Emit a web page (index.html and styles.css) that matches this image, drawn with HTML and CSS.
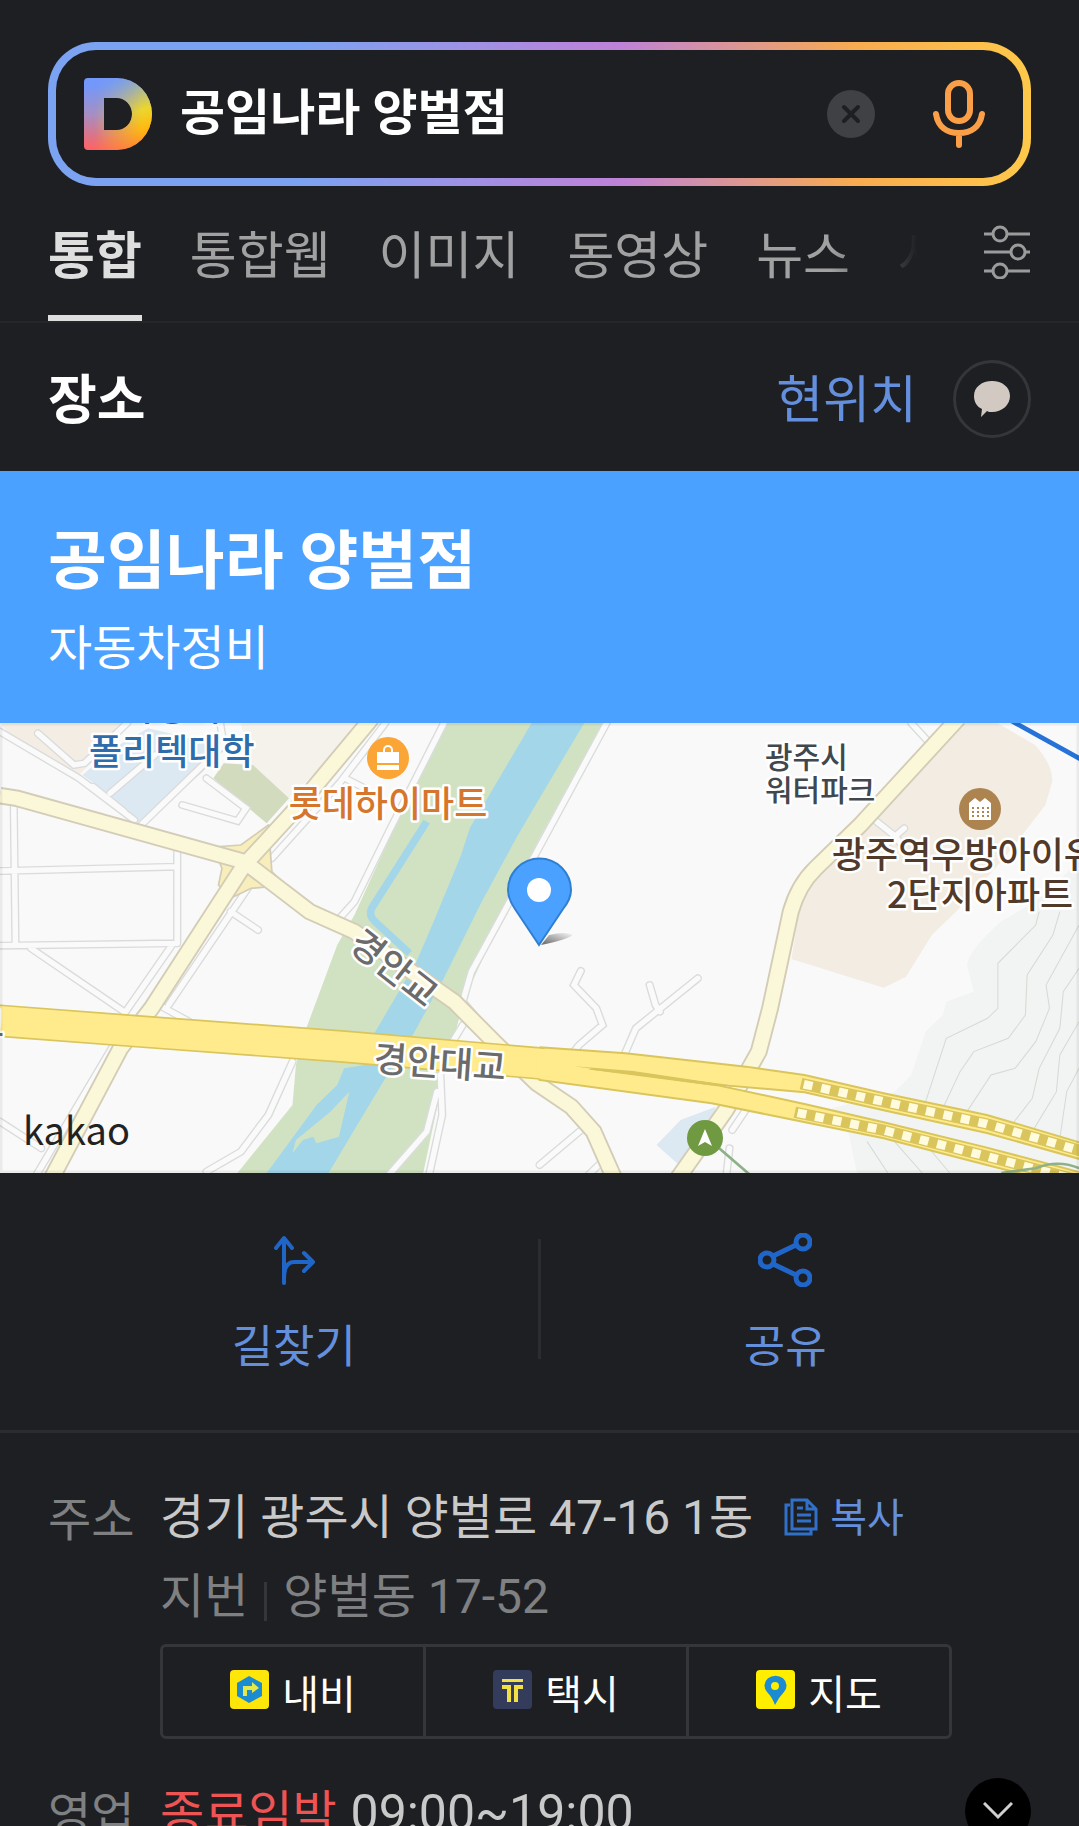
FILE: index.html
```html
<!DOCTYPE html>
<html lang="ko">
<head>
  <meta charset="UTF-8" />
  <meta name="viewport" content="width=device-width, initial-scale=1" />
  <title>공임나라 양벌점</title>
  <link rel="stylesheet" href="styles.css">
</head>
<body>

  <header>
    <form class="search">
      <div class="search-inner">
        <svg class="logo" viewBox="0 0 68 72" aria-hidden="true">
          <defs>
            <linearGradient id="logoBase" x1="0" y1="0" x2="0" y2="1">
              <stop offset="0.1" stop-color="#7398fb" />
              <stop offset="0.5" stop-color="#a58ec4" />
              <stop offset="1" stop-color="#ff6262" />
            </linearGradient>
            <linearGradient id="logoSide" x1="0.5" y1="0" x2="0.75" y2="1">
              <stop offset="0" stop-color="#7d9fe8" />
              <stop offset="0.5" stop-color="#ecd62c" />
              <stop offset="0.75" stop-color="#ffb911" />
              <stop offset="1" stop-color="#ff8a2a" />
            </linearGradient>
            <linearGradient id="logoFade" x1="0" y1="0" x2="1" y2="0">
              <stop offset="0.15" stop-color="#000" />
              <stop offset="0.85" stop-color="#fff" />
            </linearGradient>
            <mask id="logoMask"><rect width="68" height="72" fill="url(#logoFade)" /></mask>
          </defs>
          <path fill="url(#logoBase)" fill-rule="evenodd" d="M4 0H33A35 36 0 0 1 33 72H4Q0 72 0 68V4Q0 0 4 0ZM20 20V52H33A15 16 0 0 0 33 20Z" />
          <path fill="url(#logoSide)" mask="url(#logoMask)" fill-rule="evenodd" d="M4 0H33A35 36 0 0 1 33 72H4Q0 72 0 68V4Q0 0 4 0ZM20 20V52H33A15 16 0 0 0 33 20Z" />
        </svg>
        <input type="text" class="search-input" aria-label="검색어" value="공임나라 양벌점" />
        <button type="button" class="clear" aria-label="지우기">
          <svg viewBox="0 0 48 48"><path d="M17 17L31 31M31 17L17 31" /></svg>
        </button>
        <button type="button" class="mic" aria-label="음성 검색">
          <svg viewBox="0 0 52 68">
            <rect x="15" y="3" width="22" height="38" rx="11" />
            <path d="M3 34C5 47 14 53 26 53S47 47 49 34M26 53V65" />
          </svg>
        </button>
      </div>
    </form>

    <div class="tabs">
      <nav class="tab-list">
        <a href="#" class="tab active">통합</a>
        <a href="#" class="tab">통합웹</a>
        <a href="#" class="tab">이미지</a>
        <a href="#" class="tab">동영상</a>
        <a href="#" class="tab">뉴스</a>
        <a href="#" class="tab">사전</a>
      </nav>
      <button class="filter" aria-label="검색 옵션">
        <svg viewBox="0 0 48 54">
          <path d="M1 9H10M24 9H47M1 27H28M42 27H47M1 46H10M24 46H47" />
          <circle cx="17" cy="9" r="7" /><circle cx="35" cy="27" r="7" /><circle cx="17" cy="46" r="7" />
        </svg>
      </button>
    </div>
  </header>

  <main>
    <div class="place-head">
      <h2>장소</h2>
      <a href="#" class="here">현위치</a>
      <button class="talk" aria-label="톡으로 공유">
        <svg viewBox="0 0 36 38"><path d="M18 1C28 1 36 7 36 16S28 32 18 32C16 32 14 32 13 31L7 37L8 29C3 27 0 22 0 16C0 7 8 1 18 1Z" /></svg>
      </button>
    </div>

    <div class="place-title">
      <h1>공임나라 양벌점</h1>
      <p>자동차정비</p>
    </div>

    <svg class="map" viewBox="0 0 1079 450" preserveAspectRatio="xMidYMid slice" role="img" aria-label="지도">
      <defs>
        <path id="minor" d="M0 50L230 190L390 315M110 55L215 150L245 145L370 24M40 270L45 690M0 468L515 455M515 400V685M0 692L510 685M90 700L360 890M270 215L360 290M320 235L450 120M410 330L580 160L650 90L640 24M600 190L715 280L690 318L530 270M1290 24L1130 350L1030 560L985 612M1120 24L990 200L790 430M1000 188L1060 220M365 890L500 690M120 1300L0 1220M100 1390L330 990M490 870L720 520M670 590L750 645M470 875L550 920M850 1040L780 1200L700 1310L600 1370M1763 24L1568 395L1370 770L1345 860L1390 915M1345 930L1310 990M1280 1080L1285 1200L1245 1390M1270 1130L1240 1250L1130 1380M1688 768L1668 810L1733 880L1751 930L1683 990L1660 1020M2028 790L1848 940L1810 1030M1888 810L1905 870L1918 890M2548 320L2603 365L2620 390M2628 340L2578 385M2648 24L2698 80M2190 1150L2128 1245M1568 1350L1695 1240M1710 1380L1760 1330M2120 1300L2110 1390" />
        <path id="local" d="M0 242L50 250L710 440L900 590L1030 650L1320 860L1440 985L1560 1105L1660 1175L1725 1250L1785 1390M1080 10L870 270L710 450L440 880L350 1000L150 1390M2785 10L2500 330L2370 460Q2320 510 2298 590L2238 880L2205 1010L2110 1185L1970 1390" />
        <path id="highway" d="M-30 915L400 949L1000 995L1600 1048" />
        <path id="tunnelA" d="M2328 1106L2568 1160L2868 1227L3150 1310" />
        <path id="tunnelB" d="M2310 1192L2568 1246L2868 1324L3150 1400" />
      </defs>
      <rect width="1079" height="450" fill="#f9f9f9" />

      <g transform="scale(.3441 .3333) translate(0 -24)">
        <path fill="#f3ede4" d="M0 24H380L220 190L30 60Z" />
        <path fill="#dce8f2" d="M240 180L330 100L430 40L640 90L590 170L410 330L320 240Z" />
        <path fill="#f5f2ec" d="M700 24H1060L870 220L840 250L730 150Z" />
        <path fill="#d2dbbe" d="M650 145L735 150L840 250L775 325L620 190Z" />
        <path fill="#f2ece2" d="M2800 24H2898L3008 90Q3060 150 3058 200L3038 270L2918 430L2778 590L2708 660L2633 785L2568 818L2300 732L2330 540Z" />
        <path fill="#f1f4f3" d="M3136 440L3008 560L2908 620Q2800 720 2812 760L2830 830L2750 860L2740 900L2690 950L2648 1080L2600 1130L2418 1180L2468 1260L2490 1374H3136Z" />
        <g class="contour">
          <path d="M3020 590L3010 630L2900 745V880L2870 910L2750 970L2690 1160M3080 590L3060 660L2985 780L2980 900L2930 970L2830 1010L2790 1070L2740 1180M3136 630L3040 810L3050 880L3010 980L2950 1060L2880 1080L2810 1190M3136 760L3090 830L3080 940L3020 1060L3000 1150L2940 1230M3136 920L3080 1020L3070 1130L3000 1250M3136 1060L3100 1130L3080 1270M2520 1280L2580 1374M2600 1280L2680 1374M2700 1300L2760 1374" />
        </g>
        <path fill="#d1e2c3" d="M1290 24L1180 260L1030 600L980 690L890 940L860 1050L850 1170L690 1374H1230L1290 1080L1350 850L1480 560L1568 370L1755 24Z" />
        <path fill="#a4d6ea" d="M1545 24L1365 340L1340 420L1260 620L1210 740L1085 960L1060 1050L1000 1060L980 1110L920 1170L775 1374H955L1050 1210L1120 1090L1200 960L1290 790L1400 560L1500 370L1568 250L1698 24Z" />
        <path fill="none" stroke="#a4d6ea" stroke-width="22" d="M1240 320L1080 580Q1070 600 1090 620L1190 715" />
        <path fill="#d1e2c3" d="M1015 1130L985 1265L920 1285L910 1265L880 1275L850 1315L860 1275L960 1190Z" />
        <path fill="#dce8f2" d="M2080 1175L1978 1215L1908 1290L1968 1345L2060 1250Z" />

        <use href="#minor" class="minor-edge" />
        <use href="#minor" class="minor-fill" />
        <path fill="#f8eebb" stroke="#d3ccb6" stroke-width="5" d="M620 396L700 390L780 330L800 340L785 400L790 470L830 510L730 520L670 550L635 510L645 460Z" />
        <use href="#local" class="local-edge" />
        <use href="#local" class="local-fill" />

        <use href="#highway" class="highway-edge" />
        <path class="highway" d="M1568 1020L1668 1055L2090 1112L2338 1167L2568 1222L2868 1298L3150 1375V1425L2868 1350L2568 1270L2308 1215L2068 1165L1568 1095Z" />
        <path class="highway" d="M1568 997L1818 1015L2168 1055L2338 1080L2568 1135L2868 1200L3150 1286V1336L2868 1254L2568 1186L2338 1132L2118 1112L1668 1055Z" />
        <use href="#highway" class="highway-fill" />
        <path fill="#ffea8c" d="M1560 1001L1660 1009L1720 1060L1640 1100L1560 1089Z" />
        <path fill="#d9c55c" d="M1668 1054L1840 1068L2060 1102L2118 1114L2060 1110Z" />
        <use href="#tunnelA" class="tunnel" />
        <use href="#tunnelB" class="tunnel" />
        <use href="#tunnelA" class="tunnel-dash" />
        <use href="#tunnelB" class="tunnel-dash" />

        <path fill="none" stroke="#2672d8" stroke-width="14" d="M2940 18L3150 138" />
        <path fill="none" stroke="#8fb18a" stroke-width="8" d="M2090 1300L2180 1380M2910 1374L3010 1360Q3080 1330 3150 1366" />
      </g>

      <g class="pois">
        <circle cx="388" cy="35" r="21" fill="#fba536" />
        <path fill="#fff" d="M377 29H383V27A5 5 0 0 1 393 27V29H399V40H377ZM385 29H391V27A3 3 0 0 0 385 27ZM377 42H399V47H377Z" />
        <circle cx="980" cy="86" r="21" fill="#ad8450" />
        <path fill="#fff" d="M969 80L975 75L980 79L985 75L991 80V97H969Z" />
        <path stroke="#ad8450" stroke-width="2" stroke-dasharray="2 3" d="M972 85H989M972 89H989M972 93H989" />
        <circle cx="705" cy="415" r="18" fill="#6f9a41" />
        <path fill="#fff" d="M705 406L712 423L705 419L698 423Z" />
      </g>

      <g class="label">
        <text x="121" y="-2" fill="#2f6cab">국성대</text>
        <text x="89" y="42" fill="#2f6cab">폴리텍대학</text>
        <text x="388" y="94" fill="#d6762c" text-anchor="middle">롯데하이마트</text>
        <text x="394" y="258" fill="#6b6b6b" text-anchor="middle" transform="rotate(38 394 245)">경안교</text>
        <text x="440" y="353" fill="#6b6b6b" text-anchor="middle" transform="rotate(4 440 339)">경안대교</text>
        <text x="-29" y="314" fill="#6b6b6b">교</text>
        <text x="832" y="145" fill="#523a2b">광주역우방아이유쉘</text>
        <text x="887" y="185" fill="#523a2b">2단지아파트</text>
        <text x="765" y="45" fill="#3f484e" class="park">광주시</text>
        <text x="765" y="78" fill="#3f484e" class="park">워터파크</text>
      </g>
      <text x="23" y="422" class="kakao">kakao</text>

      <defs>
        <linearGradient id="pinShadow" x1="0" y1="1" x2="1" y2="0">
          <stop offset="0" stop-color="#000" stop-opacity="0.6" />
          <stop offset="1" stop-color="#000" stop-opacity="0" />
        </linearGradient>
      </defs>
      <path fill="url(#pinShadow)" d="M541 222L549 212Q566 208 573 212Q566 217 541 222Z" />
      <path fill="#4aa1ff" stroke="#2f7fd0" stroke-width="2" d="M539 222L515 186Q508 176 508 167A31 31 0 0 1 571 167Q571 176 563 186Z" />
      <circle cx="539" cy="167" r="12" fill="#fff" />
      <path fill="none" stroke="#000" stroke-opacity="0.06" stroke-width="5" d="M0 0H1079V450H0Z" />
    </svg>

    <div class="actions">
      <button class="action">
        <svg viewBox="0 0 54 54">
          <path stroke-width="4" d="M17 50V6M9 15L17 5L25 15M17 46Q17 29 27 29H45M37 20L46 29L37 38" />
        </svg>
        길찾기
      </button>
      <button class="action">
        <svg viewBox="0 0 54 54">
          <path stroke-width="5" d="M15 23L38 12M15 31L38 42" />
          <circle cx="9" cy="27" r="7" stroke-width="5" /><circle cx="45" cy="9" r="7" stroke-width="5" /><circle cx="45" cy="45" r="7" stroke-width="5" />
        </svg>
        공유
      </button>
    </div>

    <dl class="info">
      <dt>주소</dt>
      <dd>
        <div class="address">
          경기 광주시 양벌로 47-16 1동
          <button class="copy">
            <svg viewBox="0 0 34 38">
              <path d="M8 2H23L32 11V31H8ZM23 2V11H32M6 7H2V36H27V32M13 10H19M13 17H27M13 23H27" />
            </svg>
            복사
          </button>
        </div>
        <div class="jibun"><span>지번</span><span class="bar"></span><span>양벌동 17-52</span></div>
        <div class="apps">
          <a href="#">
            <svg viewBox="0 0 39 39">
              <rect width="39" height="39" rx="4" fill="#ffe60a" />
              <path fill="#1c8cd2" d="M19 6L32 13V26L19 33L7 26V13Z" />
              <path fill="#e4e84a" d="M13 26V16H22V12L29 18L22 23V20H17V26Z" />
            </svg>
            내비
          </a>
          <a href="#">
            <svg viewBox="0 0 39 39">
              <rect width="39" height="39" rx="4" fill="#343c5c" />
              <path fill="#f2e043" d="M9 9H30V12H9ZM9 15H18V32H14V19H9ZM21 15H30V19H25V32H21Z" />
            </svg>
            택시
          </a>
          <a href="#">
            <svg viewBox="0 0 39 39">
              <rect width="39" height="39" rx="4" fill="#ffee00" />
              <path fill="#1c8cd2" fill-rule="evenodd" d="M19 35Q16 27 11 22A11 10 0 1 1 28 22Q23 27 19 35ZM19 12A4 4 0 1 0 19 20A4 4 0 1 0 19 12Z" />
            </svg>
            지도
          </a>
        </div>
      </dd>
      <dt>영업</dt>
      <dd class="hours">
        <span><em>종료임박</em> <span class="time">09:00~19:00</span></span>
        <button class="more" aria-label="더보기">
          <svg viewBox="0 0 30 18"><path d="M1 1L15 15L29 1" /></svg>
        </button>
      </dd>
    </dl>
  </main>

</body>
</html>
```
FILE: styles.css
```css
* {
  box-sizing: border-box;
}

html, body {
  margin: 0;
  padding: 0;
  height: 100%;
  overflow: hidden;
  font-family: Roboto, "Noto Sans CJK KR", sans-serif;
  font-size: 48px;
  background-color: #1e1f23;
  color: #c9c9c9;
}

h1, h2, p, dl, dd {
  margin: 0;
}

a {
  color: inherit;
  text-decoration: none;
}

button {
  padding: 0;
  border: 0;
  background: none;
  color: inherit;
  font: inherit;
}

svg {
  display: block;
  fill: none;
}

/* search */
.search {
  margin: 42px 48px 0;
  padding: 8px;
  border-radius: 48px;
  background: linear-gradient(90deg, #7ba3f2 25%, #be82d8 58%, #f8ab50 82%, #ffc94a);
}

.search-inner {
  display: flex;
  align-items: center;
  height: 128px;
  padding: 0 38px 0 28px;
  border-radius: 40px;
  background: #1e1f23;
}

.logo {
  width: 68px;
  height: 72px;
}

.search-input {
  flex: 1;
  min-width: 0;
  height: 72px;
  margin-left: 28px;
  padding: 0;
  border: 0;
  outline: 0;
  background: none;
  color: #fff;
  font: bold 49px/72px Roboto, "Noto Sans CJK KR", sans-serif;
}

.clear {
  width: 48px;
  height: 48px;
  margin-right: 58px;
  border-radius: 50%;
  background: #404145;
}

.clear path {
  stroke: #1e1f23;
  stroke-width: 4;
  stroke-linecap: round;
}

.mic {
  width: 52px;
}

.mic svg {
  stroke: #fa9f47;
  stroke-width: 6;
  stroke-linecap: round;
}

/* tabs */
.tabs {
  display: flex;
  align-items: center;
  height: 137px;
  padding: 0 48px;
  border-bottom: 2px solid #25262a;
}

.tab-list {
  display: flex;
  flex: 1;
  min-width: 0;
  gap: 48px;
  height: 100%;
  margin-right: 65px;
  overflow: hidden;
  -webkit-mask-image: linear-gradient(90deg, #000 90%, transparent);
  mask-image: linear-gradient(90deg, #000 90%, transparent);
}

.tab {
  flex: none;
  padding-top: 35px;
  border-bottom: 6px solid transparent;
  color: #a1a1a2;
  font-size: 51px;
  line-height: 72px;
}

.tab.active {
  border-color: #dedede;
  color: #dedede;
  font-weight: bold;
}

.filter {
  width: 48px;
  margin-bottom: 4px;
}

.filter svg {
  stroke: #9b9b9b;
  stroke-width: 3;
}

/* place */
.place-head {
  display: flex;
  align-items: center;
  height: 148px;
  padding: 4px 48px 0;
}

.place-head h2 {
  flex: 1;
  padding-top: 4px;
  color: #fff;
  font-size: 53px;
  line-height: 72px;
}

.here {
  margin-right: 36px;
  padding-top: 4px;
  color: #648fdc;
  font-size: 51px;
  line-height: 72px;
}

.talk {
  display: flex;
  justify-content: center;
  align-items: center;
  width: 78px;
  height: 78px;
  border: 3px solid #35363a;
  border-radius: 50%;
}

.talk svg {
  width: 36px;
  fill: #d2c9c2;
}

.place-title {
  height: 252px;
  padding: 46px 48px 0;
  background: #4aa1ff;
  color: #fff;
}

.place-title h1 {
  font-size: 64px;
  line-height: 90px;
}

.place-title p {
  line-height: 84px;
}

/* map */
.map {
  width: 100%;
  height: 450px;
}

.contour {
  stroke: #d6dad2;
  stroke-width: 3;
}

.minor-edge { stroke: #dadcdc; stroke-width: 24; stroke-linecap: round; }
.minor-fill { stroke: #fafafa; stroke-width: 16; stroke-linecap: round; }
.local-edge { stroke: #d3ccb6; stroke-width: 52; }
.local-fill { stroke: #fbf8da; stroke-width: 41; }
.highway-edge { stroke: #d9c55c; stroke-width: 98; }
.highway-fill { stroke: #ffea8c; stroke-width: 88; }
.highway { fill: #ffea8c; stroke: #d9c55c; stroke-width: 6; }
.tunnel { stroke: #d9c55c; stroke-width: 34; }
.tunnel-dash { stroke: #fffbdc; stroke-width: 26; stroke-dasharray: 26 26; stroke-dashoffset: -8; }

.label {
  font-family: "Noto Sans CJK KR", sans-serif;
  font-size: 36px;
  font-weight: 500;
  stroke: #fff;
  stroke-width: 5;
  stroke-linejoin: round;
  paint-order: stroke;
}

.label .park {
  font-size: 30px;
}

.kakao {
  fill: #222;
  font-family: "Noto Sans CJK KR", sans-serif;
  font-size: 38px;
}

/* actions */
.actions {
  display: flex;
  height: 260px;
  padding: 60px 48px 0;
  border-bottom: 3px solid #2b2c30;
  background: linear-gradient(#2b2c30, #2b2c30) center 66px / 3px 120px no-repeat;
}

.action {
  display: flex;
  flex: 1;
  flex-direction: column;
  align-items: center;
  gap: 28px;
  color: #648fdc;
  font-size: 45px;
  line-height: 66px;
}

.action svg {
  flex: none;
  width: 54px;
  height: 54px;
  stroke: #2066c8;
  stroke-linecap: round;
  stroke-linejoin: round;
}

/* info */
.info {
  display: grid;
  grid-template-columns: 112px 1fr;
  row-gap: 35px;
  padding: 46px 48px 0;
}

.info dt {
  padding-top: 2px;
  color: #7f8082;
  font-size: 47px;
  line-height: 78px;
}

.address {
  display: flex;
  align-items: center;
  gap: 31px;
  line-height: 78px;
}

.copy {
  display: flex;
  align-items: center;
  gap: 12px;
  padding-top: 2px;
  color: #648fdc;
  font-size: 40px;
  line-height: 76px;
}

.copy svg {
  width: 34px;
  margin-bottom: 4px;
  stroke: #3170c8;
  stroke-width: 3;
}

.jibun {
  display: flex;
  align-items: center;
  padding-top: 1px;
  color: #7f8082;
  line-height: 78px;
}

.bar {
  width: 3px;
  height: 39px;
  margin: 8px 16px 0;
  background: #35363a;
}

.apps {
  display: flex;
  max-width: 792px;
  height: 95px;
  margin-top: 8px;
  border: 3px solid #35363a;
  border-radius: 6px;
  color: #fff;
  font-size: 40px;
}

.apps a {
  display: flex;
  flex: 1;
  justify-content: center;
  align-items: center;
  gap: 13px;
}

.apps a + a {
  border-left: 3px solid #35363a;
}

.apps svg {
  width: 39px;
  margin-bottom: 5px;
}

.hours {
  display: flex;
  justify-content: space-between;
  line-height: 78px;
}

.hours em {
  margin-right: 2px;
  color: #ee5453;
  font-style: normal;
}

.time {
  font-size: 50px;
}

.more {
  display: flex;
  justify-content: center;
  align-items: center;
  width: 66px;
  height: 66px;
  margin-top: 4px;
  border-radius: 50%;
  background: #000;
}

.more svg {
  width: 30px;
  stroke: #d0d0d0;
  stroke-width: 3;
}
```
